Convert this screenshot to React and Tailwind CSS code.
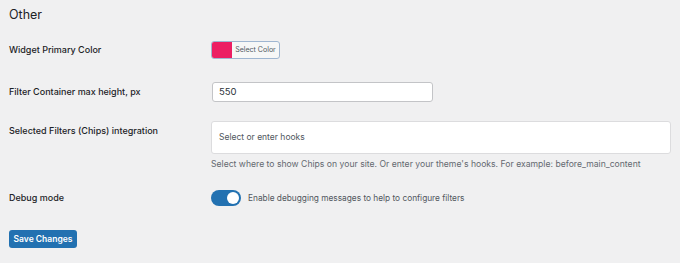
export default function App() {
  const font = { fontFamily: 'Inter, "Liberation Sans", Arial, sans-serif' };
  return (
    <div
      className="w-[680px] h-[263px] bg-[#f0f0f1] pl-[9px] pt-[6px] text-[#1d2327] overflow-hidden"
      style={font}
    >
      <h2 className="text-[12.5px] leading-[18px] font-normal m-0">Other</h2>

      <div className="flex items-center mt-[17px] h-[18px]">
        <div className="w-[202px] text-[9px] font-medium">Widget Primary Color</div>
        <div className="flex h-[18px] w-[69px] rounded-[3px] border border-[#9fb6d1] overflow-hidden bg-[#f6f7f7]">
          <div className="w-[20px] h-full bg-[#ec1e63]" />
          <div className="flex-1 flex items-center justify-center text-[7px] text-[#50575e]">
            Select Color
          </div>
        </div>
      </div>

      <div className="flex items-center mt-[23px] h-[20px]">
        <div className="w-[203px] text-[9px] font-medium">Filter Container max height, px</div>
        <div className="w-[221px] h-[20px] bg-white border border-[#c3c4c7] rounded-[3px] flex items-center px-[6px] text-[9.5px] text-[#2c3338]">
          550
        </div>
      </div>

      <div className="flex items-start mt-[19px]">
        <div className="w-[202px] pt-[4px] text-[9px] leading-[12px] font-medium">
          Selected Filters (Chips) integration
        </div>
        <div className="w-[460px] h-[33px] bg-white border border-[#dcdcde] rounded-[3px] flex items-center px-[7px] text-[8.5px] text-[#50575e]">
          Select or enter hooks
        </div>
      </div>
      <div className="ml-[202px] mt-[4px] text-[8.65px] leading-[12px] text-[#646970]">
        Select where to show Chips on your site. Or enter your theme's hooks. For example: before_main_content
      </div>

      <div className="flex items-center mt-[20px] h-[16px]">
        <div className="w-[202px] text-[9px] font-medium">Debug mode</div>
        <div className="w-[30px] h-[16px] rounded-full bg-[#2271b1] flex items-center justify-end pr-[2px]">
          <div className="w-[12px] h-[12px] rounded-full bg-white" />
        </div>
        <div className="ml-[7px] text-[8.3px] text-[#50575e]">
          Enable debugging messages to help to configure filters
        </div>
      </div>

      <button className="mt-[24px] h-[18px] w-[68px] rounded-[3px] bg-[#2271b1] text-white text-[8.5px] font-semibold flex items-center justify-center">
        Save Changes
      </button>
    </div>
  );
}
